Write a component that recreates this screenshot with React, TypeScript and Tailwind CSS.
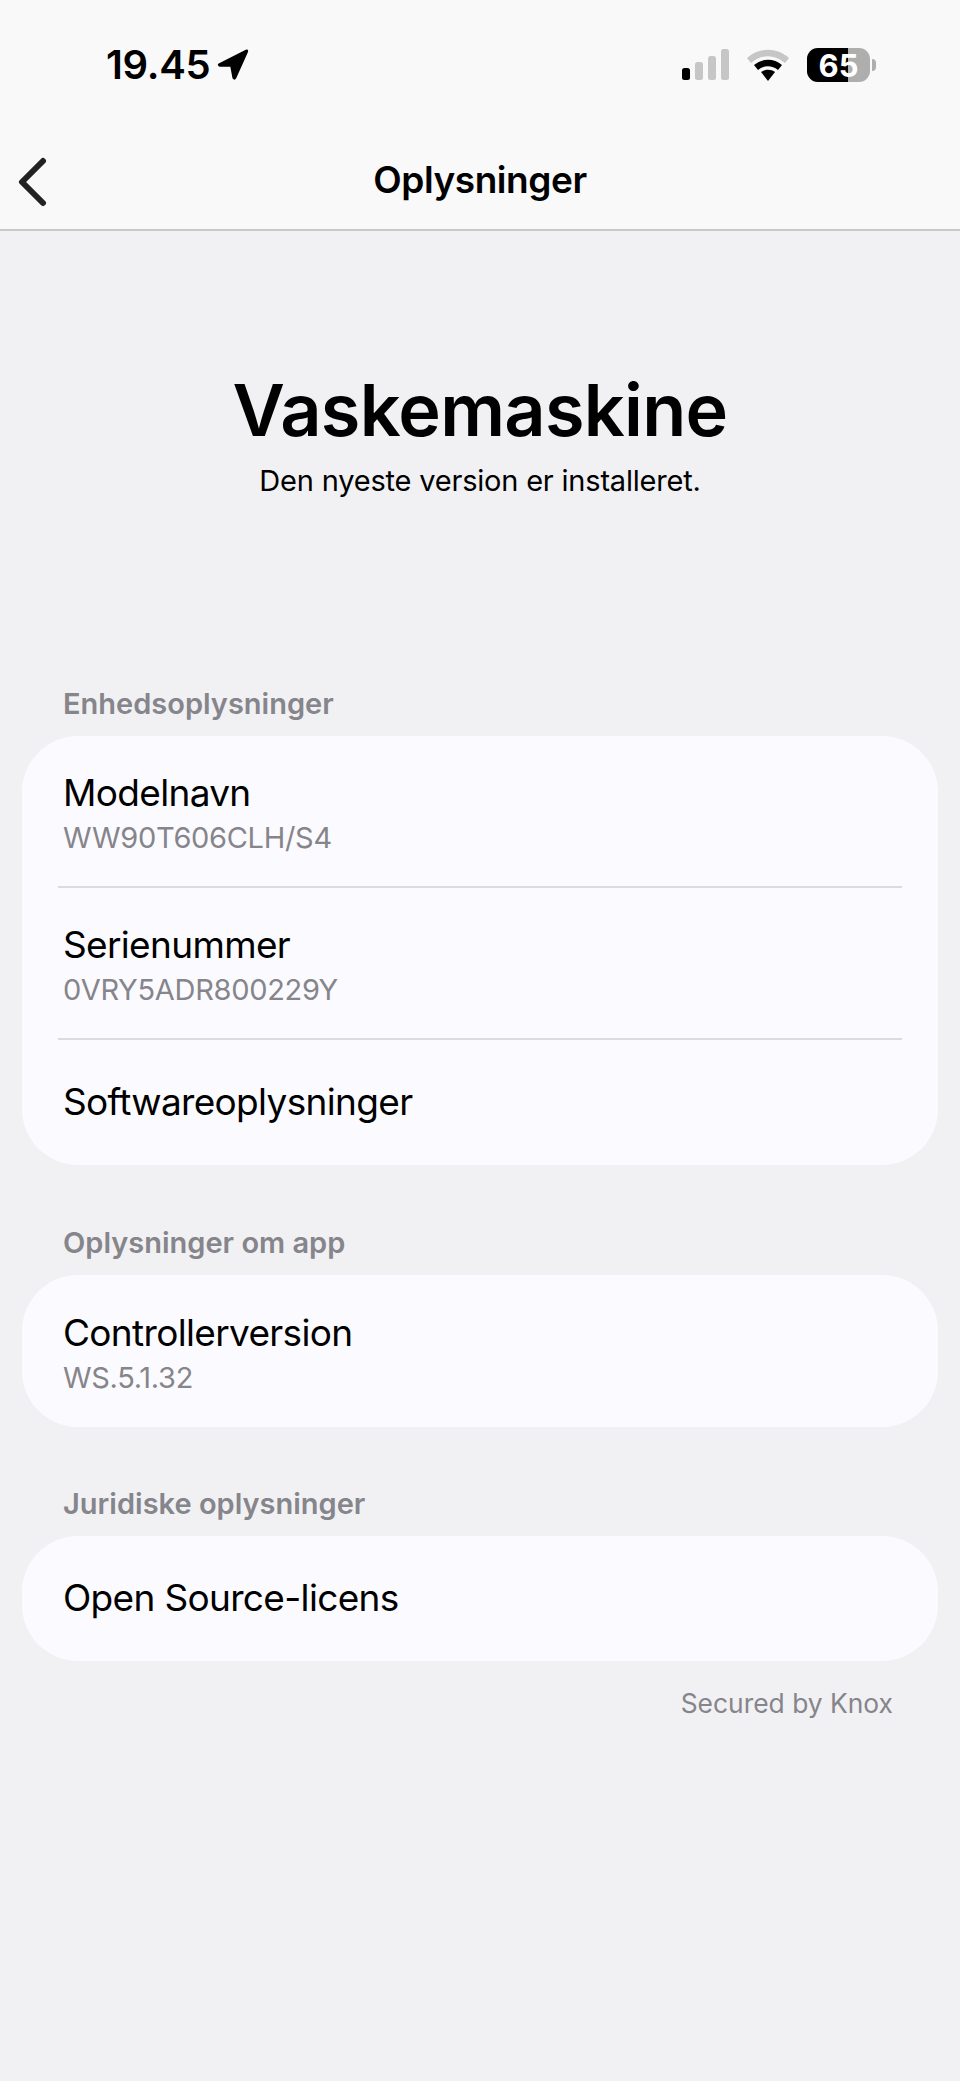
import React from "react";

const font = { fontFamily: '"Inter", "Liberation Sans", sans-serif' };

function StatusBar() {
  return (
    <div className="h-[130px] flex items-start justify-between pt-[43px] pl-[106px] pr-[84px]">
      <div className="flex items-center gap-[6px] h-[44px]">
        <span className="text-[40px] leading-[44px] font-semibold tracking-[-0.3px] text-black">19.45</span>
        <svg width="34" height="34" viewBox="0 0 32 32" className="mb-[2px]">
          <path d="M2.5 15.5 L28 2.5 Q31 1.5 30 5 L19 29.5 Q17.5 32 15.5 29.5 L13.5 18.5 L3.5 18.5 Q0.5 17 2.5 15.5 Z" fill="#000" />
        </svg>
      </div>
      <div className="flex items-center h-[44px]">
        <svg width="48" height="32" viewBox="0 0 48 32" className="mr-[17px]">
          <rect x="1" y="19" width="8" height="12" rx="2.5" fill="#000" />
          <rect x="14" y="13" width="8" height="18" rx="2.5" fill="#c6c6c6" />
          <rect x="27" y="7" width="8" height="24" rx="2.5" fill="#c6c6c6" />
          <rect x="40" y="0" width="8" height="31" rx="2.5" fill="#c6c6c6" />
        </svg>
        <svg width="44" height="32" viewBox="0 0 44 32" className="mr-[17px]">
          <path d="M1 9 C13 -2 31 -2 43 9 L39 14 C28 5 16 5 5 14 Z" fill="#c6c6c6" />
          <path d="M8 16 C16 9 28 9 36 16 L32 21 C26 16 18 16 12 21 Z" fill="#000" />
          <path d="M15 23 C19 20 25 20 29 23 L22 32 Z" fill="#000" />
        </svg>
        <div className="relative w-[63px] h-[34px] rounded-[11px] overflow-hidden bg-[#aeaeae] flex">
          <div className="w-[41px] h-full bg-black" />
          <span className="absolute inset-0 flex items-center justify-center text-[31px] font-bold leading-none text-white">65</span>
        </div>
        <div className="w-[4px] h-[12px] ml-[2px] rounded-r-full bg-[#aeaeae]" />
      </div>
    </div>
  );
}

function Row({ title, sub, last, tall }: { title: string; sub?: string; last?: boolean; tall?: boolean }) {
  const height = tall ? "h-[125px] pb-[2px]" : last ? "h-[152px] pt-[2px]" : "h-[150px] pt-[2px]";
  return (
    <div>
      <div className={`px-[41px] flex flex-col justify-center ${height}`}>
        <div className="text-[37px] leading-[50px] text-black tracking-[-0.67px]">{title}</div>
        {sub && <div className="text-[29px] leading-[38px] text-[#85858b] tracking-[-0.3px] mt-[1px]">{sub}</div>}
      </div>
      {!last && <div className="mx-[36px] h-[2px] bg-[#dcdce0]" />}
    </div>
  );
}

function SectionLabel({ children }: { children: React.ReactNode }) {
  return <div className="px-[63px] text-[29px] leading-[36px] font-semibold text-[#85858b] mb-[14px]">{children}</div>;
}

export default function App() {
  return (
    <div className="w-[960px] h-[2081px] bg-[#f1f1f4] overflow-hidden" style={font}>
      <div className="h-[231px] bg-[#f9f9f9] border-b-2 border-[#c8c8ca]">
        <StatusBar />
        <div className="relative h-[100px] flex items-center justify-center">
          <svg width="32" height="50" viewBox="0 0 32 50" className="absolute left-[16px] top-[27px]">
            <path d="M27 4 L6 25 L27 46" fill="none" stroke="#222" strokeWidth="6" strokeLinecap="round" strokeLinejoin="round" />
          </svg>
          <div className="text-[37px] font-semibold text-black tracking-[-0.44px]">Oplysninger</div>
        </div>
      </div>

      <div className="flex flex-col items-center mt-[136px]">
        <div className="text-[72px] leading-[86px] font-semibold tracking-[-0.7px] text-black">Vaskemaskine</div>
        <div className="text-[29px] leading-[38px] text-black tracking-[-0.2px] mt-[9px]">Den nyeste version er installeret.</div>
      </div>

      <div className="mt-[186px]">
        <SectionLabel>Enhedsoplysninger</SectionLabel>
        <div className="mx-[22px] bg-[#fbfbff] rounded-[56px] overflow-hidden">
          <Row title="Modelnavn" sub="WW90T606CLH/S4" />
          <Row title="Serienummer" sub="0VRY5ADR800229Y" />
          <Row title="Softwareoplysninger" last tall />
        </div>
      </div>

      <div className="mt-[60px]">
        <SectionLabel>Oplysninger om app</SectionLabel>
        <div className="mx-[22px] bg-[#fbfbff] rounded-[56px] overflow-hidden">
          <Row title="Controllerversion" sub="WS.5.1.32" last />
        </div>
      </div>

      <div className="mt-[59px]">
        <SectionLabel>Juridiske oplysninger</SectionLabel>
        <div className="mx-[22px] bg-[#fbfbff] rounded-[56px] overflow-hidden">
          <Row title="Open Source-licens" last tall />
        </div>
      </div>

      <div className="mt-[24px] pr-[67px] text-right text-[26.4px] leading-[36px] text-[#85858b]">Secured by Knox</div>
    </div>
  );
}
